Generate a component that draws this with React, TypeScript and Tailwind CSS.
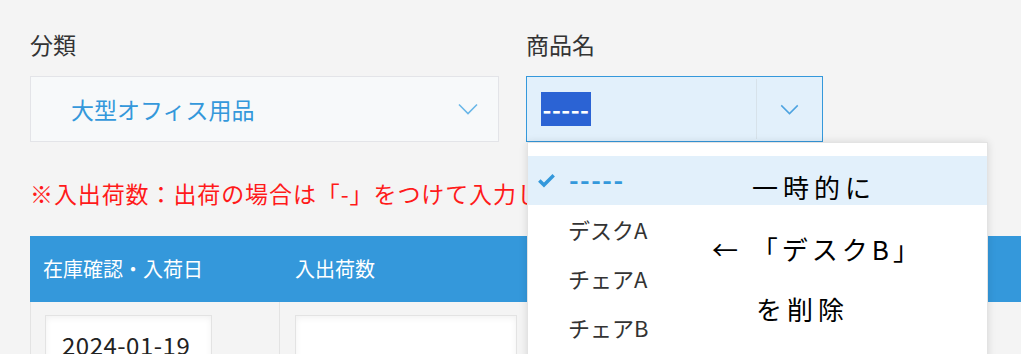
const font = { fontFamily: '"Noto Sans CJK JP", "Noto Sans", sans-serif' }

const Chevron = ({ className }: { className?: string }) => (
  <svg viewBox="0 0 20 12" className={className} fill="none" stroke="currentColor" strokeWidth="1.6">
    <path d="M1 1.5 L10 10.5 L19 1.5" />
  </svg>
)

const Check = () => (
  <svg viewBox="0 0 18 15" className="w-[17px] h-[14px] text-[#3498db]" fill="currentColor">
    <path d="M0 8.2 L2.6 5.6 L6.3 9.2 L15.4 0 L18 2.6 L6.3 14.4 Z" />
  </svg>
)

const App = () => {
  return (
    <div className="relative w-[1021px] h-[354px] overflow-hidden bg-[#f4f4f4] text-[#333]" style={font}>
      <div className="pl-[30px] pt-[30px]">
        <div className="flex gap-[27px]">
          <div className="w-[469px]">
            <p className="text-[23px] leading-[28px] mb-[18px]">分類</p>
            <div className="h-[66px] bg-[#f7f9fa] border border-[#e3e4e8] flex items-center pl-[40px] pr-[20px]">
              <span className="flex-1 text-[23px] text-[#3498db]">大型オフィス用品</span>
              <Chevron className="w-[20px] h-[12px] text-[#6ab7e8]" />
            </div>
          </div>
          <div className="w-[297px]">
            <p className="text-[23px] leading-[28px] mb-[18px]">商品名</p>
            <div className="h-[66px] bg-[#e2f0fb] border border-[#3498db] flex items-stretch">
              <div className="flex-1 flex items-center pl-[14px]">
                <span className="bg-[#2b63d4] text-white text-[24px] font-bold leading-[34px] w-[50px] tracking-[0.5px] text-center overflow-hidden whitespace-nowrap">-----</span>
              </div>
              <div className="w-[66px] my-[2px] border-l border-[#d7e2ea] flex items-center justify-center">
                <Chevron className="w-[19px] h-[11px] text-[#4da3e0]" />
              </div>
            </div>
          </div>
        </div>

        <p className="mt-[36px] text-[23px] leading-[30px] tracking-[0.9px] text-[#ff1a1a] whitespace-nowrap">
          ※入出荷数：出荷の場合は「-」をつけて入力してください。
        </p>

        <div className="mt-[28px] w-[1100px]">
          <div className="h-[66px] bg-[#3498db] flex items-center text-white text-[20px]">
            <div className="w-[249px] pl-[13px]">在庫確認・入荷日</div>
            <div className="pl-[16px]">入出荷数</div>
          </div>
          <div className="flex h-[60px] border-l border-[#e3e3e3]">
            <div className="w-[249px] border-r border-[#e3e3e3] pl-[14px] pt-[13px]">
              <div className="w-[167px] h-[60px] bg-white border border-[#e3e3e3] shadow-[inset_0_2px_6px_rgba(0,0,0,0.06)] pl-[16px] pt-[14px] text-[24px] leading-[30px] tracking-[0.5px] text-[#222]">
                2024-01-19
              </div>
            </div>
            <div className="pl-[15px] pt-[13px]">
              <div className="w-[222px] h-[60px] bg-white border border-[#e3e3e3] shadow-[inset_0_2px_6px_rgba(0,0,0,0.06)]" />
            </div>
          </div>
        </div>
      </div>

      <div className="absolute left-[527px] top-[142px] w-[461px] h-[230px] bg-white border border-[#e3e3e3] shadow-[0_0_8px_rgba(0,0,0,0.12)] pt-[13px]">
        <div className="h-[49px] bg-[#e2f0fb] flex items-center pl-[10px] gap-[14px]">
          <Check />
          <span className="text-[#3498db] text-[26px] font-bold tracking-[1.5px] leading-[30px] -mt-[4px]">-----</span>
        </div>
        {['デスクA', 'チェアA', 'チェアB'].map((item) => (
          <div key={item} className="h-[49px] flex items-center pl-[40px] text-[22px] text-[#333]">
            {item}
          </div>
        ))}
        <div className="absolute left-[224px] top-[28px] text-[26px] leading-[32px] tracking-[5px] text-black">一時的に</div>
        <div className="absolute left-[184px] top-[90px] text-[26px] leading-[32px] tracking-[4px] text-black whitespace-nowrap">← 「デスクB」</div>
        <div className="absolute left-[228px] top-[150px] text-[26px] leading-[32px] tracking-[5px] text-black">を削除</div>
      </div>
    </div>
  )
}

export default App
